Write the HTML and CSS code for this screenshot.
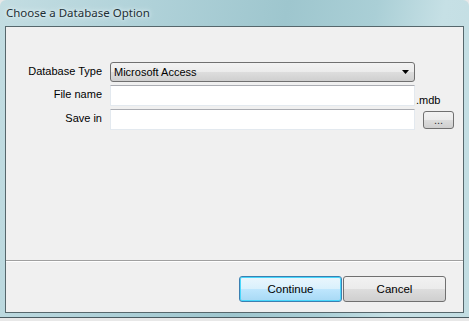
FILE: index.html
```html
<!DOCTYPE html>
<html lang="en">
<head>
    <meta charset="UTF-8">
    <meta name="viewport" content="width=device-width, initial-scale=1.0">
    <title>Choose a Database Option</title>
    <link rel="stylesheet" href="styles.css">
</head>
<body>
    <div class="window">
        <div class="titlebar">Choose a Database Option</div>
        <div class="client">
            <div class="form-panel">
                <div class="form-grid">
                    <label class="field-label" for="db-type">Database Type</label>
                    <div class="combo" id="db-type">
                        <span>Microsoft Access</span>
                        <svg class="combo-arrow" width="7" height="4" viewBox="0 0 7 4"><path d="M0 0h7L3.5 4z" fill="#000"/></svg>
                    </div>
                    <span></span>

                    <label class="field-label" for="file-name">File name</label>
                    <input class="textbox" type="text" id="file-name">
                    <span class="suffix">.mdb</span>

                    <label class="field-label" for="save-in">Save in</label>
                    <input class="textbox" type="text" id="save-in">
                    <button class="btn btn-small">...</button>
                </div>
            </div>
            <div class="button-panel">
                <button class="btn btn-default">Continue</button>
                <button class="btn">Cancel</button>
            </div>
        </div>
    </div>
</body>
</html>
```

FILE: styles.css
```css
/* Page / desktop behind the window */
body {
    margin: 0;
    padding: 0;
    background-color: #e8e8e8;
    font-family: "Liberation Sans", Arial, sans-serif;
    font-size: 11px;
    color: #000;
}

/* Aero-style window frame */
.window {
    box-sizing: border-box;
    width: 469px;
    height: 318px;
    display: flex;
    flex-direction: column;
    padding: 0 5px 4px 5px;
    border-bottom: 1px solid #4a5a60;
    border-radius: 6px 6px 0 0;
    background: linear-gradient(100deg, #c3dde2 0%, #b2d3da 25%, #9ec6ce 55%, #aacfd6 72%, #c6e0e5 85%, #c2dde2 100%);
}

.titlebar {
    height: 26px;
    line-height: 26px;
    padding-left: 1px;
    font-family: "Noto Sans", "Open Sans", sans-serif;
    font-size: 11.5px;
    color: #1e2f35;
    text-shadow: 0 0 6px #e8f4f6, 0 0 3px #e8f4f6;
}

/* Client area */
.client {
    flex: 1;
    display: flex;
    flex-direction: column;
    border: 1px solid #56676c;
    background-color: #f0f0f0;
}

.form-panel {
    height: 233px;
    border-bottom: 1px solid #a0a0a0;
    box-shadow: 0 1px 0 #ffffff;
}

.form-grid {
    display: grid;
    grid-template-columns: 96px 305px auto;
    grid-template-rows: 20px 21px 21px;
    column-gap: 8px;
    row-gap: 3px;
    padding-top: 35px;
    align-items: center;
}

.field-label {
    text-align: right;
    padding-bottom: 3px;
}

/* Combo box */
.combo {
    box-sizing: border-box;
    height: 20px;
    display: flex;
    align-items: center;
    justify-content: space-between;
    padding: 0 5px 0 3px;
    border: 1px solid #707070;
    border-radius: 3px;
    background: linear-gradient(#f2f2f2 0%, #ebebeb 50%, #dddddd 51%, #cfcfcf 100%);
}

.combo-arrow {
    display: block;
}

/* Text boxes */
.textbox {
    box-sizing: border-box;
    height: 21px;
    width: 305px;
    margin: 0;
    border: 1px solid #e3e9ef;
    border-top-color: #abadb3;
    background-color: #ffffff;
    font: inherit;
}

.suffix {
    margin-left: -7px;
    align-self: end;
    color: #000;
}

/* Buttons */
.btn {
    box-sizing: border-box;
    width: 103px;
    height: 26px;
    border: 1px solid #707070;
    border-radius: 3px;
    background: linear-gradient(#f2f2f2 0%, #ebebeb 50%, #dddddd 51%, #cfcfcf 100%);
    font-family: "Liberation Sans", Arial, sans-serif;
    font-size: 11.5px;
    color: #000;
    padding: 0;
}

.btn-default {
    border-color: #3c7fb1;
    box-shadow: inset 0 0 0 1px #48d7fb;
    background: linear-gradient(#eaf6fd 0%, #d9f0fc 50%, #bee6fd 51%, #a7d9f5 100%);
}

.btn-small {
    width: 31px;
    height: 18px;
    font-size: 11px;
    line-height: 10px;
    color: #333;
}

.button-panel {
    flex: 1;
    display: flex;
    justify-content: flex-end;
    align-items: flex-start;
    gap: 1px;
    padding: 15px 17px 0 0;
}
```
